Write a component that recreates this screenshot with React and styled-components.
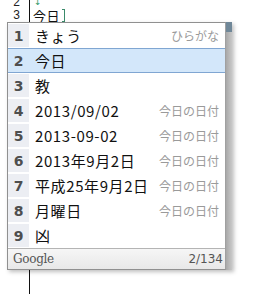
import styled, { createGlobalStyle } from "styled-components";

const GlobalStyle = createGlobalStyle`
  html, body {
    margin: 0;
    padding: 0;
    background: #fff;
  }
`;

const Editor = styled.div`
  position: relative;
  display: flex;
  height: 294px;
  overflow: hidden;
`;

const Gutter = styled.div`
  width: 30px;
  border-right: 1px solid #111;
  box-sizing: border-box;
  margin-top: -4px;
  padding-right: 9px;
  text-align: right;
  font: 12px/13px "Liberation Sans", Arial, sans-serif;
  color: #222;
`;

const Code = styled.div`
  margin-top: -4px;
  padding-left: 3px;
  font: 13px/13px "Noto Sans CJK JP", sans-serif;
  color: #111;
`;

const CodeLine = styled.div`
  height: 13px;
  display: flex;
  align-items: center;
`;

const Arrow = styled.span`
  color: #2f9a6a;
  font: 9px/9px "DejaVu Sans", sans-serif;
  padding-left: 1px;
`;

const Composing = styled.span`
  border-bottom: 1px solid #000;
  line-height: 13px;
  letter-spacing: 0.5px;
`;

const Caret = styled.span`
  display: inline-block;
  width: 2px;
  height: 11px;
  margin-left: 2px;
  border: 1px solid #3a8a6a;
  border-left: none;
`;

const Popup = styled.div`
  position: absolute;
  left: 7px;
  top: 22px;
  display: flex;
  box-shadow: 2px 2px 4px rgba(0, 0, 0, 0.25);
`;

const List = styled.div`
  width: 219px;
  border: 1px solid #909090;
  border-right-color: #a0a0a0;
  box-sizing: border-box;
  background: #fff;
`;

const Row = styled.div`
  display: flex;
  align-items: stretch;
  height: 25px;
  box-sizing: border-box;
  background: ${(p) => (p.$selected ? "#d3e7fa" : "transparent")};
  border: 1px solid ${(p) => (p.$selected ? "#80a6d2" : "transparent")};
  border-left: none;
  border-right: none;
`;

const Num = styled.div`
  width: 21px;
  flex: none;
  display: flex;
  align-items: center;
  justify-content: center;
  background: ${(p) => (p.$selected ? "transparent" : "#eceef3")};
  font: bold 14px "DejaVu Sans", Verdana, sans-serif;
  color: #4e4e4e;
`;

const Word = styled.div`
  flex: 1;
  display: flex;
  align-items: center;
  padding-left: 6px;
  font: 15px "Noto Sans CJK JP", sans-serif;
  letter-spacing: 0.6px;
  color: #111;
  white-space: nowrap;
`;

const Note = styled.div`
  display: flex;
  align-items: center;
  padding-right: 6px;
  font: 12px "Noto Sans CJK JP", sans-serif;
  color: #9a9a9a;
  white-space: nowrap;
`;

const Footer = styled.div`
  height: 20px;
  border-top: 1px solid #b4b4b4;
  background: linear-gradient(#f6f6f6, #e8e8e8);
  display: flex;
  align-items: center;
  justify-content: space-between;
  padding: 0 2px 0 5px;
`;

const Brand = styled.span`
  font: 12px "DejaVu Serif", Georgia, serif;
  color: #555;
  letter-spacing: -0.3px;
`;

const Count = styled.span`
  font: 12px "DejaVu Sans", Verdana, sans-serif;
  color: #555;
`;

const Scroll = styled.div`
  width: 6px;
  background: linear-gradient(90deg, #a8a8a8, #c8c8c8);
  display: flex;
  flex-direction: column;
`;

const Thumb = styled.div`
  height: 10px;
  background: #6f8798;
`;

const candidates = [
  { w: "きょう", n: "ひらがな" },
  { w: "今日" },
  { w: "教" },
  { w: "2013/09/02", n: "今日の日付" },
  { w: "2013-09-02", n: "今日の日付" },
  { w: "2013年9月2日", n: "今日の日付" },
  { w: "平成25年9月2日", n: "今日の日付" },
  { w: "月曜日", n: "今日の日付" },
  { w: "凶" },
];

export default function App() {
  return (
    <>
      <GlobalStyle />
      <Editor>
        <Gutter>
          <div>2</div>
          <div>3</div>
        </Gutter>
        <Code>
          <CodeLine>
            <Arrow>↓</Arrow>
          </CodeLine>
          <CodeLine>
            <Composing>今日</Composing>
            <Caret />
          </CodeLine>
        </Code>
        <Popup>
          <List>
            {candidates.map((c, i) => (
              <Row key={i} $selected={i === 1}>
                <Num $selected={i === 1}>{i + 1}</Num>
                <Word>{c.w}</Word>
                {c.n && <Note>{c.n}</Note>}
              </Row>
            ))}
            <Footer>
              <Brand>Google</Brand>
              <Count>2/134</Count>
            </Footer>
          </List>
          <Scroll>
            <Thumb />
          </Scroll>
        </Popup>
      </Editor>
    </>
  );
}
